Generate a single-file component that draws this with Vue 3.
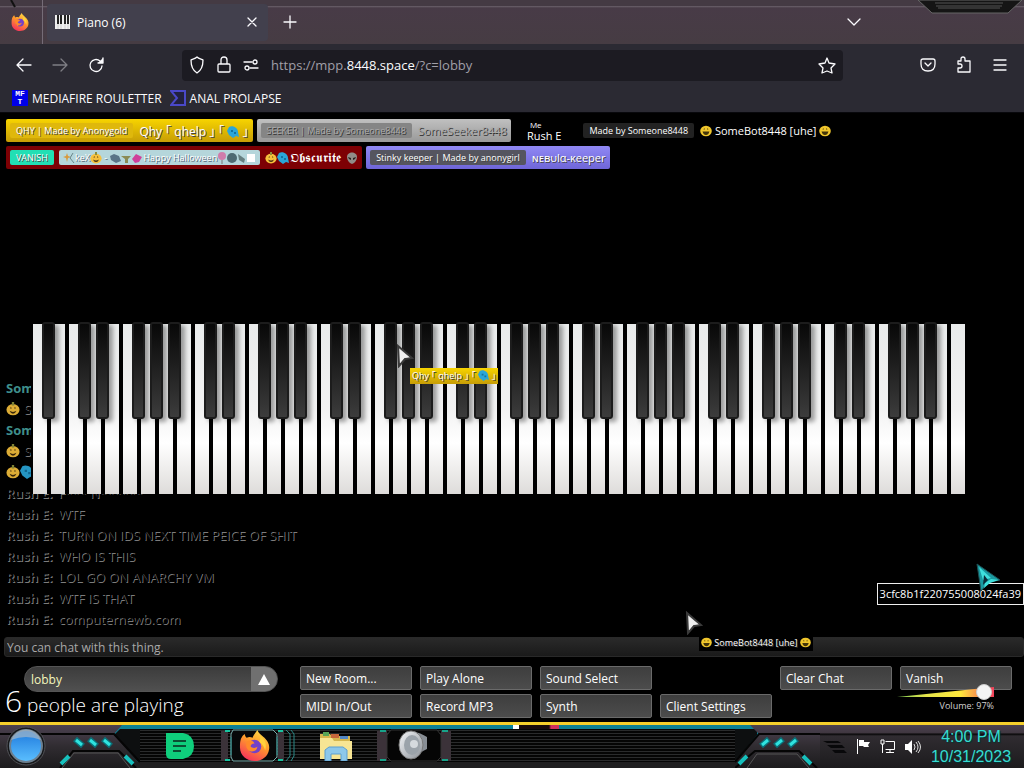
<template>
  <div class="desktop">
    <!-- Shared artwork -->
    <svg class="sprite" aria-hidden="true">
      <defs>
        <linearGradient id="fox-g" x1="0.8" y1="0" x2="0.3" y2="1">
          <stop offset="0" stop-color="#ffe14a" />
          <stop offset="0.45" stop-color="#ff9a2b" />
          <stop offset="1" stop-color="#f5315c" />
        </linearGradient>
        <linearGradient id="cone-g" x1="0" y1="0" x2="1" y2="1">
          <stop offset="0" stop-color="#f4f6f8" />
          <stop offset="1" stop-color="#8c9299" />
        </linearGradient>
      </defs>
      <symbol id="firefox" viewBox="0 0 32 32">
        <path
          d="M2 9c1-2 2-4 4-5 0 2 1 3 2 4 2-1 4-1 6 0 1-3 3-5 5-8 1 3 3 4 6 7 4 3 7 8 6 13-1 7-7 12-15 12S1 26 1 18c0-3 0-6 1-9z"
          fill="url(#fox-g)"
        />
        <circle cx="16" cy="17" r="7" fill="#7341c8" />
        <path d="M8 12c3-2 7-1 8 2-3 0-4 2-4 3 2 2 5 2 7 0 0 5-7 7-10 3-2-2-2-6-1-8z" fill="#ff8a2a" />
        <path d="M22 6c5 4 7 9 5 15-1-4-3-7-6-9 1-2 1-4 1-6z" fill="#ffd23d" />
      </symbol>
      <symbol id="pumpkin" viewBox="0 0 12 12">
        <ellipse cx="6" cy="6.6" rx="5.6" ry="4.8" fill="#f6c03c" />
        <path d="M5 0h2v3H5z" fill="#8c8f3a" />
        <path d="M3.500 5.500l.7-1.500.7 1.500zM7 5.500l.7-1.500.7 1.500zM3 7.500q3 2 6 0-1 2.500-3 2.500t-3-2.500z" fill="#3d2a0c" />
      </symbol>
      <symbol id="grin" viewBox="0 0 12 12">
        <ellipse cx="6" cy="6" rx="5.800" ry="5.300" fill="#f0c62c" />
        <path d="M3.500 4.500l.7-1.500.7 1.500zM7 4.500l.7-1.500.7 1.500zM2.500 6.500h7q-1 3.500-3.500 3.500t-3.500-3.500z" fill="#43350a" />
      </symbol>
      <symbol id="ghost" viewBox="0 0 12 12">
        <path d="M2 1c4-2 9 1 9 5l1 5-3-1-3 2-4-3L0 5z" fill="#2aa6d8" />
        <path d="M4 4h2v2H4zM7 6h2v2H7z" fill="#1373a0" />
      </symbol>
      <symbol id="skull" viewBox="0 0 12 12">
        <path d="M1 5c0-6 10-6 10 0 0 3-2 6-5 7C3 11 1 8 1 5z" fill="#918c88" />
        <path d="M2 5l3 1v2L3 7zM10 5L7 6v2l2-1z" fill="#29211f" />
      </symbol>
      <symbol id="arrow" viewBox="0 0 18 24">
        <path d="M2 2l14 12-7 1-6 7z" fill="#e4e4e4" stroke="#3a3a3a" stroke-width="2" />
        <path d="M4 6l9 7-5 1-4 5z" fill="#f0f0f0" />
      </symbol>
    </svg>

    <header class="chrome">
      <div class="tabstrip">
        <svg class="frame-left" viewBox="0 0 16 8"><path d="M11 0l4 7" stroke="#111" stroke-width="2" /></svg>
        <div class="pinned"><svg width="18" height="18"><use href="#firefox" /></svg></div>
        <div class="tab">
          <svg width="15" height="14" viewBox="0 0 15 14">
            <path d="M0 0h15v14H0z" fill="#eee" />
            <path d="M2 0h2v9H2zM5 0h2v9H5zM9 0h2v9H9zM12 0h2v9h-2z" fill="#222" />
            <path d="M3 9v5M6 9v5M10 9v5M13 9v5" stroke="#aaa" stroke-width="0.5" />
          </svg>
          <span class="tab-title">Piano (6)</span>
          <button class="icon-btn" aria-label="Close tab">
            <svg width="10" height="10" viewBox="0 0 10 10"><path d="M1 1l8 8M9 1L1 9" class="line" /></svg>
          </button>
        </div>
        <button class="icon-btn new-tab" aria-label="New tab">
          <svg width="14" height="14" viewBox="0 0 14 14"><path d="M7 1v12M1 7h12" class="line" /></svg>
        </button>
        <button class="icon-btn all-tabs" aria-label="List all tabs">
          <svg width="14" height="8" viewBox="0 0 14 8"><path d="M1 1l6 6 6-6" class="line" /></svg>
        </button>
        <svg class="frame-right" viewBox="0 0 104 14">
          <path d="M0 0h104L90 13H14z" fill="#151515" stroke="#666" />
          <path d="M17 3h68M18 6h66M20 8h62" stroke="#555" />
        </svg>
      </div>

      <div class="toolbar">
        <button class="icon-btn" aria-label="Back">
          <svg width="16" height="14" viewBox="0 0 16 14"><path d="M15 7H2M7 1L1 7l6 6" class="line" /></svg>
        </button>
        <button class="icon-btn dim" aria-label="Forward">
          <svg width="16" height="14" viewBox="0 0 16 14"><path d="M1 7h13M9 1l6 6-6 6" class="line" /></svg>
        </button>
        <button class="icon-btn" aria-label="Reload">
          <svg width="16" height="16" viewBox="0 0 16 16">
            <path d="M14 9a6 6 0 1 1-2-5l2 2M15 1v5h-5" class="line" /><path d="M15 1v5h-5z" fill="#fbfbfe" />
          </svg>
        </button>
        <div class="urlbar">
          <svg width="16" height="18" viewBox="0 0 16 18">
            <path d="M8 1c2 2 5 2 6 3 0 6-1 10-6 13C3 14 2 10 2 4c1-1 4-1 6-3z" class="line" />
          </svg>
          <svg width="14" height="18" viewBox="0 0 14 18">
            <path d="M2 8h10q1 0 1 1v6q0 1-1 1H2q-1 0-1-1V9q0-1 1-1zM4 8V4q0-3 3-3t3 3v4" class="line" />
          </svg>
          <svg width="16" height="12" viewBox="0 0 16 12">
            <path d="M1 3h8M7 9h8" class="line" /><circle cx="12" cy="3" r="2" class="line" /><circle cx="4" cy="9" r="2" class="line" />
          </svg>
          <span class="url">https://mpp.<b>8448.space</b>/?c=lobby</span>
          <svg width="18" height="18" viewBox="0 0 18 18">
            <path d="M9 2l2 5 6 1-4 4 1 5-5-2-5 2 1-5-4-4 6-1z" class="line" />
          </svg>
        </div>
        <div class="tools">
          <button class="icon-btn" aria-label="Save to Pocket">
            <svg width="16" height="14" viewBox="0 0 16 14">
              <path d="M3 1h10q2 0 2 2v3q0 7-7 7T1 6V3q0-2 2-2zM5 5l3 3 3-3" class="line" />
            </svg>
          </button>
          <button class="icon-btn" aria-label="Extensions">
            <svg width="16" height="18" viewBox="0 0 16 18">
              <path d="M2 5h3V3q0-2 2-2t2 2v2h5v11H2v-4h2q2 0 2-2T4 8H2z" class="line" />
            </svg>
          </button>
          <button class="icon-btn" aria-label="Menu">
            <svg width="14" height="12" viewBox="0 0 14 12"><path d="M1 1h12M1 6h12M1 11h12" class="line" /></svg>
          </button>
        </div>
      </div>

      <nav class="bookmarks">
        <a href="#">
          <span class="mft">MF<br />T</span>
          MEDIAFIRE ROULETTER
        </a>
        <a href="#">
          <svg width="16" height="16" viewBox="0 0 16 16">
            <path d="M1 1h14v14H1l6-7z" fill="#22213f" stroke="#4a48c8" stroke-width="2" />
          </svg>
          ANAL PROLAPSE
        </a>
      </nav>
    </header>

    <main class="page">
      <section class="room">
        <div class="names">
          <div class="names-row">
            <div class="name gold">
              <span class="tag gold-tag">QHY | Made by Anonygold</span>
              <span class="big">Qhy ｢ qhelp ｣ ｢ <svg class="emoji"><use href="#ghost" /></svg> ｣</span>
            </div>
            <div class="name silver">
              <span class="tag silver-tag">SEEKER | Made by Someone8448</span>
              <span>SomeSeeker8448</span>
            </div>
            <div class="name plain me">
              <small>Me</small>
              <span>Rush E</span>
            </div>
            <div class="name plain">
              <span class="tag dark-tag">Made by Someone8448</span>
              <span>
                <svg class="emoji"><use href="#grin" /></svg> SomeBot8448 [uhe] <svg class="emoji"><use href="#grin" /></svg>
              </span>
            </div>
          </div>
          <div class="names-row">
            <div class="name red">
              <span class="tag vanish-tag">VANISH</span>
              <span class="tag sky-tag">
                <svg width="12" height="12" viewBox="0 0 12 12">
                  <path d="M4 1l1 3 3 1-3 1-1 4-1-4-3-1 3-1z" fill="#d89a3c" /><path d="M10 1L7 6l4 5" stroke="#68858a" fill="none" />
                </svg>keX<svg class="emoji"><use href="#pumpkin" /></svg>&nbsp;-&nbsp;<svg width="34" height="12" viewBox="0 0 34 12">
                  <path d="M1 4l4-2 5 2 2 5-5 2-5-3z" fill="#5a7487" /><path d="M12 4h10l-3 3v4h-3V7z" fill="#8a8b55" />
                  <path d="M23 7l4-5 6 3-3 5-4 1z" fill="#cf3f9b" />
                </svg>Happy Halloween<svg width="39" height="12" viewBox="0 0 39 12">
                  <circle cx="5" cy="4" r="4" fill="#d07cab" /><path d="M5 8v4" stroke="#777" />
                  <circle cx="15" cy="6" r="5" fill="#4e6a72" /><path d="M21 2l7 5-1 4-5-3z" fill="#667f80" />
                  <path d="M30 2h8v8h-8z" fill="#fff" />
                </svg>
              </span>
              <svg class="emoji"><use href="#pumpkin" /></svg>
              <svg class="emoji"><use href="#ghost" /></svg>
              <span class="fraktur">𝕺𝖇𝖘𝖈𝖚𝖗𝖎𝖙𝖊</span>
              <svg class="emoji"><use href="#skull" /></svg>
            </div>
            <div class="name violet">
              <span class="tag slate-tag">Stinky keeper | Made by anonygirl</span>
              <span>ɴᴇʙυlα-κeeper</span>
            </div>
          </div>
        </div>

        <ul class="chat">
          <li v-for="(m, i) in messages" :key="i" :class="{ bot: m.bot }">
            <b v-if="m.name">{{ m.name }}</b>
            <template v-else>
              <svg class="emoji"><use href="#pumpkin" /></svg>
              <svg v-if="m.ghost" class="emoji"><use href="#ghost" /></svg>
            </template>
            <span>{{ m.text }}</span>
          </li>
        </ul>

        <div class="piano">
          <div v-for="k in keys" :key="k.index" class="white">
            <div v-if="k.sharp" class="black"></div>
          </div>
        </div>
      </section>

      <input class="chat-input" type="text" placeholder="You can chat with this thing." aria-label="Chat message" />

      <footer class="controls">
        <div class="status">
          <div class="room-select">
            <select aria-label="Room">
              <option>lobby</option>
            </select>
            <button aria-label="More rooms">
              <svg width="12" height="11" viewBox="0 0 12 11"><path d="M6 0l6 11H0z" fill="#fff" /></svg>
            </button>
          </div>
          <p class="count"><span>6</span> people are playing</p>
        </div>
        <div class="buttons">
          <button v-for="b in buttons" :key="b.label" :class="b.place">{{ b.label }}</button>
        </div>
        <div class="volume">
          <svg width="97" height="12" viewBox="0 0 97 12">
            <linearGradient id="vol-g">
              <stop offset="0" stop-color="#7dc855" />
              <stop offset="0.3" stop-color="#e6e44a" />
              <stop offset="0.65" stop-color="#ffe83c" />
              <stop offset="1" stop-color="#f2405c" />
            </linearGradient>
            <path d="M0 11L97 1v10z" fill="url(#vol-g)" />
          </svg>
          <input id="volume" v-model.number="volume" type="range" min="0" max="100" />
          <label for="volume">Volume: {{ volume }}%</label>
        </div>
      </footer>

      <!-- Other people's mouse cursors -->
      <div class="cursor cursor-qhy">
        <svg width="18" height="24"><use href="#arrow" /></svg>
        <span class="gold">Qhy ｢ qhelp ｣ ｢ <svg class="emoji"><use href="#ghost" /></svg> ｣</span>
      </div>
      <div class="cursor cursor-bot">
        <svg width="18" height="24"><use href="#arrow" /></svg>
        <span>
          <svg class="emoji"><use href="#grin" /></svg> SomeBot8448 [uhe] <svg class="emoji"><use href="#grin" /></svg>
        </span>
      </div>
      <div class="tooltip">3cfc8b1f220755008024fa39</div>
      <svg class="pointer" width="26" height="30" viewBox="0 0 26 30">
        <path d="M1 1l23 16-11 2-8 9z" fill="#1a9aa0" stroke="#1d5054" />
        <path d="M3 4l12 11-8 2zM9 20l6-4 8 1-9 3-6 5z" fill="#3fe0dc" />
        <path d="M8 12l4 5-5 5z" fill="#0c2c38" />
      </svg>
    </main>

    <div class="taskbar">
      <svg class="bar-left" viewBox="0 0 140 43">
        <linearGradient id="bar-g" x1="0" y1="0" x2="0" y2="1">
          <stop offset="0" stop-color="#4b4150" /><stop offset="0.5" stop-color="#302c31" /><stop offset="1" stop-color="#1c1b1d" />
        </linearGradient>
        <linearGradient id="orb-g" x1="0" y1="0" x2="0" y2="1">
          <stop offset="0" stop-color="#1d78dc" /><stop offset="1" stop-color="#5cc0ff" />
        </linearGradient>
        <path d="M0 0h122l-8 9 24 28v6H0z" fill="url(#bar-g)" />
        <path d="M120 4h20v33h-2l-24-27z" fill="#0d0f10" />
        <path d="M137 37h3v6h-3z" fill="#1f1f20" />
        <path d="M0 9h114l26 28M60 43l13-17h46l17 17" fill="none" stroke="#050505" stroke-width="2" />
        <path d="M62 43l12-15h44l12 15" fill="none" stroke="#555" />
        <circle cx="26" cy="21" r="19" fill="#161719" stroke="#515257" />
        <circle cx="26" cy="21" r="16" fill="url(#orb-g)" stroke="#6d7f8e" stroke-width="2" />
        <path d="M11 15a16 16 0 0 1 30 0q-15-6-30 0z" fill="#a5b8c8" opacity="0.7" />
        <path d="M75 14l8 7M89 14l8 7M103 14l8 7" stroke="#0b6f77" stroke-width="6" />
        <path d="M76 15l6 5M90 15l6 5M104 15l6 5" stroke="#2fe3df" stroke-width="3" />
        <path d="M61 39l8-8M125 31l8 8" stroke="#17c0bd" stroke-width="4" />
      </svg>

      <div class="bar-mid">
        <div class="strip"><i></i><em></em></div>
        <div class="apps">
          <button aria-label="Document">
            <svg width="30" height="26" viewBox="0 0 30 26">
              <path d="M1 0h17q11 2 11 13T18 26H6q-5 0-5-5z" fill="#0fce7c" />
              <path d="M8 8h13M8 13h13M8 18h8" stroke="#0b4f34" stroke-width="2" />
            </svg>
          </button>
          <button aria-label="Firefox">
            <svg width="74" height="33" viewBox="0 0 74 33">
              <path d="M0 2h7v30H0zM57 2h6v30h-6z" fill="#3b3239" />
              <path d="M12 1h40l4 4v23l-4 4H12l-2-4V5z" fill="#070809" stroke="#7aaead" />
              <path d="M65 1l4 4v22l-4 5M70 1l3 4v22l-3 5M56 8v18M10 8v18" fill="none" stroke="#2b8987" />
              <path d="M4 2h5M57 2h5M4 31h5M57 31h5" stroke="#18c3a0" stroke-width="2" />
              <use href="#firefox" x="18" y="1" width="31" height="31" />
            </svg>
          </button>
          <button aria-label="Explorer">
            <svg width="34" height="30" viewBox="0 0 34 30">
              <path d="M1 3h10l2 2h18v23H1z" fill="#d5b64e" />
              <path d="M4 1h6v4H4z" fill="#57a557" /><path d="M12 3h8v4h-8z" fill="#c7673b" /><path d="M21 5h8v3h-8z" fill="#5487c4" />
              <path d="M1 7h12l2 3h18v18H1z" fill="#f7e594" />
              <path d="M6 30V19l4-3h14l4 3v11h-6v-7H12v7z" fill="#8dc8ea" stroke="#5d9fd0" />
            </svg>
          </button>
          <button aria-label="Sound">
            <svg width="74" height="33" viewBox="0 0 74 33">
              <path d="M0 2h10v30H0zM64 2h10v30H64z" fill="#3b3239" />
              <path d="M14 1h46l4 5v22l-4 4H14l-4-4V6z" fill="#050505" stroke="#333" />
              <path d="M3 2h6M65 2h6M3 31h6M65 31h6" stroke="#18a38a" stroke-width="2" />
              <path d="M35 2q9 2 15 6v12q-7 3-13 10z" fill="#888e95" />
              <ellipse cx="34" cy="16" rx="12" ry="14" fill="url(#cone-g)" stroke="#777" />
              <ellipse cx="35" cy="16" rx="8" ry="10" fill="#9ba3aa" />
              <circle cx="37" cy="15" r="4" fill="#d5dade" />
            </svg>
          </button>
        </div>
      </div>

      <svg class="bar-right" viewBox="0 0 85 43">
        <path d="M0 4h22v6L0 37z" fill="#0d0f10" />
        <path d="M15 0h70v43H0v-6l24-28z" fill="url(#bar-g)" />
        <path d="M85 9H24L0 37M0 43l20-17h44l18 17" fill="none" stroke="#050505" stroke-width="2" />
        <path d="M12 43l10-14h40l12 14" fill="none" stroke="#555" />
        <path d="M26 21l8-7M40 21l8-7M54 21l8-7" stroke="#0b6f77" stroke-width="6" />
        <path d="M27 20l6-5M41 20l6-5M55 20l6-5" stroke="#2fe3df" stroke-width="3" />
        <path d="M4 39l8-8M68 31l8 8" stroke="#17c0bd" stroke-width="4" />
      </svg>

      <div class="tray">
        <svg width="24" height="14" viewBox="0 0 24 14">
          <path d="M0 1h15l3 2H4zM4 5h15l3 3H8zM9 10h12l3 3H12z" fill="#08080a" />
        </svg>
        <svg width="15" height="15" viewBox="0 0 15 15">
          <path d="M1 0h1v15H1z" fill="#fff" /><path d="M3 1h5v2h6l-2 3 1 2H8L7 7H3z" fill="#fff" />
        </svg>
        <svg width="16" height="15" viewBox="0 0 16 15">
          <path d="M5.500 2.500h9v8h-9M10 11v3M6 13.500h8M2.500 5v9M1 1h3v4H1z" fill="none" stroke="#fff" />
        </svg>
        <svg width="16" height="14" viewBox="0 0 16 14">
          <path d="M0 4h3l4-4v14l-4-4H0z" fill="#fff" /><path d="M9 4q2 3 0 6M11 2q4 5 0 10M13 1q5 6 0 12" fill="none" stroke="#ddd" />
        </svg>
        <time>4:00 PM<br />10/31/2023</time>
      </div>
    </div>
  </div>
</template>

<script setup>
import { ref } from "vue";

const volume = ref(97);

const messages = [
  { name: "SomeBot8448", text: "", bot: true },
  { text: "SomeBot8448" },
  { name: "SomeBot8448", text: "", bot: true },
  { text: "SomeBot8448" },
  { text: "", ghost: true },
  { name: "Rush E:", text: "F*** N******" },
  { name: "Rush E:", text: "WTF" },
  { name: "Rush E:", text: "TURN ON IDS NEXT TIME PEICE OF SHIT" },
  { name: "Rush E:", text: "WHO IS THIS" },
  { name: "Rush E:", text: "LOL GO ON ANARCHY VM" },
  { name: "Rush E:", text: "WTF IS THAT" },
  { name: "Rush E:", text: "computernewb.com" },
];

// 52 white keys starting at A; B and E have no sharp
const keys = Array.from({ length: 52 }, (_, index) => ({
  index,
  sharp: index < 51 && ![1, 4].includes(index % 7),
}));

const buttons = [
  { label: "New Room..." },
  { label: "Play Alone" },
  { label: "Sound Select" },
  { label: "Clear Chat", place: "col-5" },
  { label: "Vanish" },
  { label: "MIDI In/Out", place: "col-1" },
  { label: "Record MP3" },
  { label: "Synth" },
  { label: "Client Settings" },
];
</script>

<style>
body {
  margin: 0;
  background: #000;
}
</style>

<style scoped>
.desktop {
  min-height: 100vh;
  display: flex;
  flex-direction: column;
  background: #000;
  color: #fff;
  font-family: "Open Sans", "Noto Sans", "Noto Sans CJK JP", sans-serif;
  font-size: 12px;
  overflow: hidden;
}

.desktop * {
  box-sizing: border-box;
}

.sprite {
  position: absolute;
  width: 0;
  height: 0;
}

svg {
  flex: none;
}

button,
input,
select {
  font: inherit;
  color: inherit;
}

.line {
  fill: none;
  stroke: #fbfbfe;
  stroke-width: 1.3;
  stroke-linecap: round;
  stroke-linejoin: round;
}

.icon-btn {
  display: grid;
  place-items: center;
  width: 20px;
  height: 20px;
  padding: 0;
  border: none;
  background: transparent;
}

.emoji {
  width: 12px;
  height: 12px;
  vertical-align: -2px;
}

/* Browser */
.chrome {
  background: #2b2a33;
}

.tabstrip {
  position: relative;
  display: flex;
  align-items: center;
  height: 44px;
  background: linear-gradient(#443a43 0, #443a43 6px, #6b626c 6px, #483b47 8px, #463c43);
}

.frame-left {
  position: absolute;
  left: 0;
  top: 0;
  width: 16px;
}

.frame-right {
  position: absolute;
  right: 2px;
  top: 0;
  width: 104px;
}

.pinned {
  display: grid;
  place-items: center;
  width: 43px;
  height: 44px;
  padding-right: 2px;
  border-right: 1px solid #756c77;
}

.tab {
  display: flex;
  align-items: center;
  gap: 7px;
  width: 221px;
  height: 37px;
  margin-left: 4px;
  padding: 0 6px 0 8px;
  border-radius: 4px;
  background: #42404d;
}

.tab-title {
  flex: 1;
}

.new-tab {
  margin-left: 12px;
}

.all-tabs {
  margin-left: auto;
  margin-right: 160px;
}

.toolbar {
  display: flex;
  align-items: center;
  gap: 16px;
  height: 42px;
  padding: 0 14px;
}

.dim {
  opacity: 0.4;
}

.urlbar {
  flex: 1;
  display: flex;
  align-items: center;
  gap: 12px;
  height: 31px;
  margin-left: 60px;
  padding: 0 7px;
  border-radius: 4px;
  background: #1c1b22;
}

.url {
  flex: 1;
  font-size: 13px;
  color: #a09fa8;
}

.url b {
  font-weight: 400;
  color: #fbfbfe;
}

.tools {
  display: flex;
  gap: 16px;
  margin-left: 59px;
}

.bookmarks {
  display: flex;
  gap: 8px;
  height: 26px;
  padding: 0 12px 2px;
}

.bookmarks a {
  display: flex;
  align-items: center;
  gap: 4px;
  color: #fbfbfe;
  text-decoration: none;
}

.mft {
  width: 16px;
  height: 16px;
  background: #0000e8;
  font: bold 8px/8px "Liberation Mono", monospace;
  text-align: center;
}

/* Piano room */
.page {
  position: relative;
  flex: 1;
  display: flex;
  flex-direction: column;
  border-top: 1px solid #08080c;
}

.room {
  flex: 1;
  display: grid;
  grid-template-rows: 211px 1fr;
}

.names {
  grid-area: 1 / 1;
  display: flex;
  flex-direction: column;
  gap: 4px;
  padding: 6px;
}

.names-row {
  display: flex;
  gap: 4px;
}

.name {
  display: flex;
  align-items: center;
  gap: 6px;
  height: 23px;
  padding: 0 4px;
  border-radius: 2px;
  font-size: 11px;
  white-space: nowrap;
  text-shadow: 1px 1px #444;
}

.tag {
  display: flex;
  align-items: center;
  height: 15px;
  padding: 0 6px;
  border-radius: 2px;
  font-size: 9px;
}

.big {
  font-size: 12px;
}

.gold {
  background: linear-gradient(#f7d400, #c79d06);
}

.gold-tag {
  background: #dfb80c;
}

.silver {
  background: linear-gradient(#c0c0c0, #999);
  color: #aaa;
  text-shadow: 1px 1px #333;
}

.silver-tag {
  background: #858585;
}

.plain {
  text-shadow: none;
}

.me {
  flex-direction: column;
  align-items: flex-start;
  justify-content: center;
  gap: 0;
  margin: 0 10px 0 8px;
  line-height: 12px;
}

.me small {
  padding-left: 3px;
  font-size: 8px;
  line-height: 11px;
}

.dark-tag {
  background: #222;
}

.red {
  gap: 5px;
  background: #7d0004;
}

.vanish-tag {
  background: #22dfb4;
}

.sky-tag {
  padding: 0 4px;
  background: #b5d6db;
  text-shadow: 1px 1px #567;
}

.red > .emoji + .emoji {
  margin-left: -5px;
}

.fraktur {
  margin-left: -4px;
  font-family: "DejaVu Sans", "DejaVu Serif", serif;
  font-size: 13px;
  text-shadow: none;
}

.violet {
  background: linear-gradient(#9088f4, #6f66d8);
}

.slate-tag {
  background: #55555f;
}

.piano {
  grid-area: 2 / 1;
  align-self: start;
  display: flex;
  gap: 4px;
  margin-left: 31px;
  margin-right: 59px;
  padding-left: 2px;
  background: #000;
  z-index: 1;
}

.white {
  position: relative;
  flex: 1;
  height: 170px;
  background: linear-gradient(#e9ebeb, #f2f2f2 50%, #fff 70%, #dedcda);
}

.black {
  position: absolute;
  z-index: 1;
  left: calc(50% + 2px);
  top: -2px;
  width: 13px;
  height: 97px;
  border: 2px solid #1c1c1c;
  border-radius: 3px;
  background: linear-gradient(#080808, #1c1c1c 40%, #3c3c3c);
  box-shadow: 4px 3px 4px rgba(0, 0, 0, 0.35);
}

.chat {
  grid-area: 2 / 1;
  align-self: end;
  margin: 0;
  padding: 0 6px 8px;
  list-style: none;
  font-size: 13px;
  color: #000;
  text-shadow: 1px 1px #7c7c7c;
}

.chat li {
  display: flex;
  align-items: center;
  height: 21px;
}

.chat b {
  margin-right: 6px;
}

.chat .emoji {
  width: 14px;
  height: 14px;
  opacity: 0.9;
}

.chat .emoji + span {
  margin-left: 4px;
}

.chat .bot {
  color: #3f8f8c;
  text-shadow: none;
}

.chat-input {
  height: 20px;
  margin-left: 4px;
  padding: 0 2px;
  border: 1px solid #292929;
  border-radius: 3px;
  background: linear-gradient(#2a2a2a, #1a1a1a);
}

.chat-input::placeholder {
  color: #a8a8a8;
  opacity: 1;
}

.controls {
  position: relative;
  display: flex;
  justify-content: space-between;
  height: 65px;
  padding: 9px 12px 0 5px;
}

.room-select {
  display: flex;
  width: 254px;
  height: 26px;
  margin-left: 19px;
  border: 1px solid #555;
  border-radius: 13px;
  background: linear-gradient(#3c3c3c, #505050);
  overflow: hidden;
}

.room-select select {
  flex: 1;
  padding: 0 6px;
  border: none;
  appearance: none;
  background: transparent;
  color: #f4f7bd;
}

.room-select button {
  display: grid;
  place-items: center;
  width: 26px;
  padding: 0;
  border: none;
  background: #707070;
}

.count {
  margin: -8px 0 0;
  font-size: 19px;
  font-weight: 300;
  line-height: 34px;
}

.count span {
  font-size: 30px;
}

.buttons {
  display: grid;
  grid-template-columns: repeat(6, 112px);
  grid-auto-rows: 24px;
  gap: 4px 8px;
}

.buttons button {
  padding: 0 5px;
  border: 1px solid #6a6a6a;
  border-radius: 2px;
  background: linear-gradient(#3e3e3e, #4c4c4c);
  text-align: left;
}

.col-1 {
  grid-column: 1;
}

.col-5 {
  grid-column: 5;
}

.volume {
  position: absolute;
  right: 30px;
  top: 29px;
  width: 97px;
  display: grid;
  text-align: right;
}

.volume svg,
.volume input {
  grid-area: 1 / 1;
}

.volume input {
  width: 97px;
  height: 12px;
  margin: 0;
  appearance: none;
  background: transparent;
}

.volume input::-webkit-slider-thumb {
  appearance: none;
  width: 16px;
  height: 16px;
  border-radius: 50%;
  border: 1px solid #ccc;
  background: #f4f4f4;
}

.volume label {
  font-size: 9px;
  line-height: 16px;
  color: #d0d0d0;
}

/* Cursors */
.cursor {
  position: absolute;
}

.cursor > svg {
  display: block;
}

.cursor span {
  display: block;
  margin-left: 14px;
  padding: 0 2px;
  font-size: 9px;
  line-height: 16px;
  white-space: nowrap;
  text-shadow: 1px 1px #333;
}

.cursor .emoji {
  width: 11px;
  height: 11px;
}

.cursor-qhy {
  left: 396px;
  top: 231px;
  z-index: 2;
}

.cursor-bot {
  left: 685px;
  top: 498px;
}

.cursor-bot span {
  background: #000;
}

.tooltip {
  position: absolute;
  right: 0;
  top: 470px;
  padding: 0 2px;
  border: 1px solid #eee;
  background: #000;
  font-size: 11px;
  line-height: 20px;
}

.pointer {
  position: absolute;
  right: 22px;
  top: 450px;
}

/* Taskbar */
.taskbar {
  display: flex;
  height: 46px;
  border-top: 3px solid #f5cf2c;
  background: #1c1b1d;
}

.bar-left {
  width: 140px;
  height: 43px;
  background: #0b8196;
}

.bar-right {
  width: 85px;
  height: 43px;
  background: #0b8196;
}

.bar-mid {
  flex: 1;
  background: repeating-linear-gradient(#050505 0, #050505 2px, #2a2b2c 2px, #2a2b2c 3px);
  border-bottom: 6px solid #1f1f20;
}

.strip {
  display: flex;
  justify-content: center;
  height: 4px;
  background: #0b8196;
}

.strip i {
  width: 6px;
  margin-left: 196px;
  background: #fff;
}

.strip em {
  width: 40px;
  background: linear-gradient(90deg, #170a0c 75%, #d0315d 80%);
}

.apps {
  display: flex;
  gap: 4px;
  padding-left: 3px;
}

.apps button {
  display: grid;
  place-items: center;
  width: 74px;
  height: 33px;
  padding: 0;
  border: none;
  background: transparent;
}

.tray {
  display: flex;
  align-items: center;
  gap: 9px;
  padding: 0 12px 0 3px;
  background: linear-gradient(#4b4150 0, #403740 8px, #050505 9px, #302c31 11px, #1c1b1d);
}

.tray time {
  width: 82px;
  font: 16px/20px "Liberation Sans", sans-serif;
  color: #35dcd2;
  text-align: center;
  text-shadow: 1px 1px 1px #033;
}
</style>
